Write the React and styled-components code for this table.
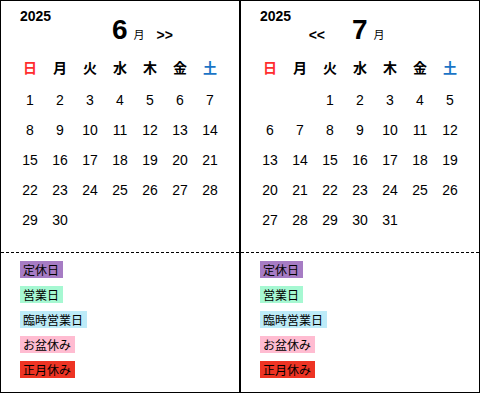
import React from 'react'
import styled, { createGlobalStyle } from 'styled-components'

const GlobalStyle = createGlobalStyle`
  html, body {
    margin: 0;
    padding: 0;
    background: #fff;
  }
  body {
    font-family: "Liberation Sans", "Noto Sans CJK JP", sans-serif;
    color: #000;
  }
`;

const Wrapper = styled.div`
  display: flex;
  width: 480px;
  height: 393px;
`;

const Panel = styled.div`
  box-sizing: border-box;
  width: 240px;
  height: 393px;
  border: 1px solid #000;
  display: flex;
  flex-direction: column;
`;

const Top = styled.div`
  box-sizing: border-box;
  height: 252px;
  border-bottom: 1px dashed #000;
`;

const Year = styled.div`
  padding: 7px 0 0 19px;
  font-size: 14px;
  line-height: 16px;
  font-weight: bold;
`;

const MonthRow = styled.div`
  display: grid;
  grid-template-columns: 111px auto 1fr;
  align-items: baseline;
  height: 29px;
  margin-top: -9px;
`;

const Arrow = styled.span`
  font-size: 14px;
  font-weight: bold;
  justify-self: ${p => (p.$prev ? 'end' : 'start')};
  margin: ${p => (p.$prev ? '0 27px 0 0' : '0 0 0 12px')};
  position: relative;
  top: 1px;
`;

const Month = styled.span`
  display: flex;
  align-items: baseline;
  gap: 6px;
`;

const MonthNum = styled.span`
  font-size: 28px;
  line-height: 29px;
  font-weight: bold;
`;

const MonthUnit = styled.span`
  font-size: 11px;
  font-family: "Noto Sans CJK JP", sans-serif;
`;

const Grid = styled.div`
  display: grid;
  grid-template-columns: repeat(7, 30px);
  grid-template-rows: 37px;
  grid-auto-rows: 30px;
  margin: 4px 0 0 14px;
`;

const HeadCell = styled.div`
  display: flex;
  align-items: center;
  justify-content: center;
  font-family: "Noto Sans CJK JP", sans-serif;
  font-weight: bold;
  font-size: 14px;
  color: ${p => p.$color || '#000'};
`;

const DayCell = styled.div`
  display: flex;
  align-items: center;
  justify-content: center;
  font-size: 14px;
`;

const Legend = styled.div`
  display: flex;
  flex-direction: column;
  align-items: flex-start;
  gap: 7px;
  padding: 8px 0 0 19px;
`;

const Tag = styled.span`
  height: 18px;
  line-height: 18px;
  padding: 0 4px 0 3px;
  font-family: "Noto Sans CJK JP", sans-serif;
  font-size: 12px;
  background: ${p => p.$bg};
`;

const WEEK = [
  { label: '日', color: '#ff2e2e' },
  { label: '月' },
  { label: '火' },
  { label: '水' },
  { label: '木' },
  { label: '金' },
  { label: '土', color: '#1a74c6' },
];

const TAGS = [
  { label: '定休日', bg: '#a67cc4' },
  { label: '営業日', bg: '#a6f8d2' },
  { label: '臨時営業日', bg: '#bdebf8' },
  { label: 'お盆休み', bg: '#ffbcd1' },
  { label: '正月休み', bg: '#ee3424' },
];

const MonthPanel = ({ year, month, offset, days, prev, next }) => {
  const cells = [];
  for (let i = 0; i < offset; i++) cells.push(<DayCell key={'e' + i} />);
  for (let d = 1; d <= days; d++) cells.push(<DayCell key={d}>{d}</DayCell>);

  return (
    <Panel>
      <Top>
        <Year>{year}</Year>
        <MonthRow>
          {prev ? <Arrow $prev>&lt;&lt;</Arrow> : <span />}
          <Month>
            <MonthNum>{month}</MonthNum>
            <MonthUnit>月</MonthUnit>
          </Month>
          {next ? <Arrow>&gt;&gt;</Arrow> : <span />}
        </MonthRow>
        <Grid>
          {WEEK.map(w => (
            <HeadCell key={w.label} $color={w.color}>{w.label}</HeadCell>
          ))}
          {cells}
        </Grid>
      </Top>
      <Legend>
        {TAGS.map(t => (
          <div key={t.label}>
            <Tag $bg={t.bg}>{t.label}</Tag>
          </div>
        ))}
      </Legend>
    </Panel>
  )
}

const App = () => {
  return (
    <>
      <GlobalStyle />
      <Wrapper>
        <MonthPanel year={2025} month={6} offset={0} days={30} next />
        <MonthPanel year={2025} month={7} offset={2} days={31} prev />
      </Wrapper>
    </>
  )
}

export default App
